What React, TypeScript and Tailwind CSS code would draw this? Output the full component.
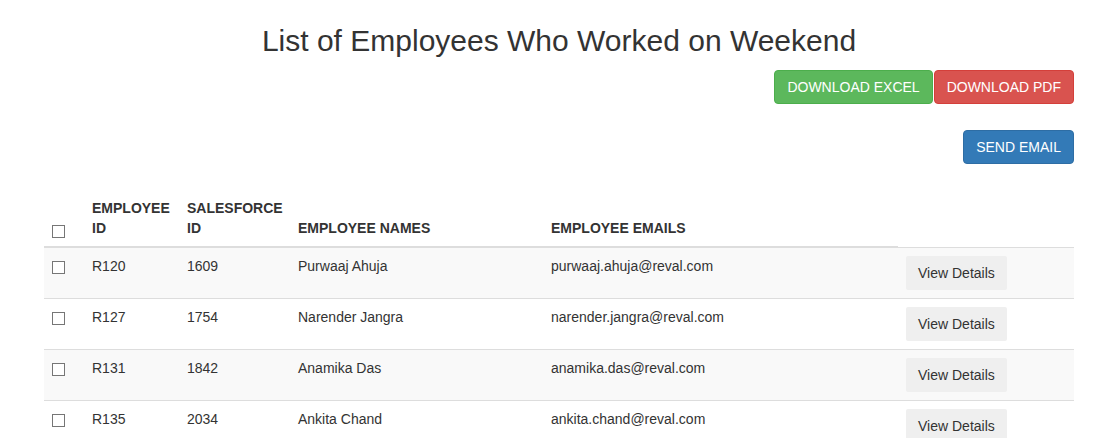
import React from "react";

const rows = [
  { id: "R120", sf: "1609", name: "Purwaaj Ahuja", email: "purwaaj.ahuja@reval.com" },
  { id: "R127", sf: "1754", name: "Narender Jangra", email: "narender.jangra@reval.com" },
  { id: "R131", sf: "1842", name: "Anamika Das", email: "anamika.das@reval.com" },
  { id: "R135", sf: "2034", name: "Ankita Chand", email: "ankita.chand@reval.com" },
];

function Box({ top }: { top: string }) {
  return <span className={`inline-block w-[13px] h-[13px] border border-[#767676] bg-white align-top ${top}`} />;
}

export default function App() {
  return (
    <div className="min-h-[438px] bg-white text-[#333] text-[14px] leading-[20px] font-['Liberation_Sans',Arial,sans-serif]">
      <div className="ml-[44px] w-[1030px]">
        <h2 className="pt-[24px] text-[30px] leading-[33px] text-center font-normal">
          List of Employees Who Worked on Weekend
        </h2>
        <div className="mt-[13px] flex justify-end">
          <button className="h-[34px] px-[12px] bg-[#5cb85c] border border-[#4cae4c] rounded-[4px] text-white uppercase">
            Download Excel
          </button>
          <button className="ml-px h-[34px] px-[12px] bg-[#d9534f] border border-[#d43f3a] rounded-[4px] text-white uppercase">
            Download PDF
          </button>
        </div>
        <div className="mt-[26px] flex justify-end">
          <button className="h-[34px] px-[12px] bg-[#337ab7] border border-[#2e6da4] rounded-[4px] text-white uppercase">
            Send Email
          </button>
        </div>
        <table className="mt-[26px] w-[1030px] table-fixed border-collapse">
          <colgroup>
            <col className="w-[40px]" />
            <col className="w-[95px]" />
            <col className="w-[111px]" />
            <col className="w-[253px]" />
            <col className="w-[355px]" />
            <col className="w-[176px]" />
          </colgroup>
          <thead>
            <tr className="text-[14px] font-bold text-left">
              <th className="p-[8px] align-bottom border-b-2 border-[#ddd]"><Box top="mt-[7px]" /></th>
              <th className="p-[8px] align-bottom border-b-2 border-[#ddd]">EMPLOYEE ID</th>
              <th className="p-[8px] align-bottom border-b-2 border-[#ddd]">SALESFORCE ID</th>
              <th className="p-[8px] align-bottom border-b-2 border-[#ddd]">EMPLOYEE NAMES</th>
              <th className="p-[8px] align-bottom border-b-2 border-[#ddd]">EMPLOYEE EMAILS</th>
            </tr>
          </thead>
          <tbody>
            {rows.map((r, i) => (
              <tr key={r.id} className={i % 2 === 0 ? "bg-[#f9f9f9]" : "bg-white"}>
                <td className="p-[8px] align-top border-t border-[#ddd]"><Box top="mt-[5px]" /></td>
                <td className="p-[8px] align-top border-t border-[#ddd]">{r.id}</td>
                <td className="p-[8px] align-top border-t border-[#ddd]">{r.sf}</td>
                <td className="p-[8px] align-top border-t border-[#ddd]">{r.name}</td>
                <td className="p-[8px] align-top border-t border-[#ddd]">{r.email}</td>
                <td className="p-[8px] align-top border-t border-[#ddd]">
                  <button className="h-[34px] px-[12px] bg-[#efefef] rounded-[2px] text-[#333]">View Details</button>
                </td>
              </tr>
            ))}
          </tbody>
        </table>
      </div>
    </div>
  );
}
